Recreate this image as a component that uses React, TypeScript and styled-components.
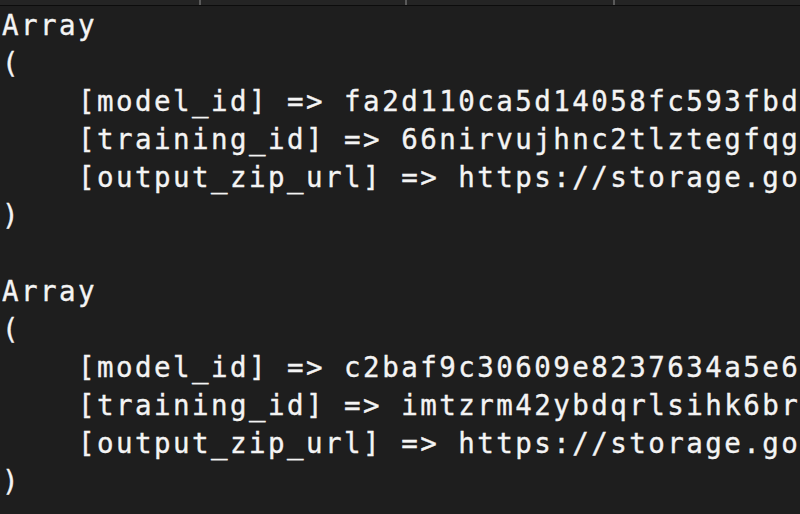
import React from "react";
import styled, { createGlobalStyle } from "styled-components";

const Global = createGlobalStyle`
  html, body { margin: 0; padding: 0; background: #1e1e1e; }
  body { width: 800px; height: 514px; overflow: hidden; }
`;

const Screen = styled.div`
  width: 800px;
  height: 514px;
  background: #1e1e1e;
  display: flex;
  flex-direction: column;
  overflow: hidden;
`;

const TabStrip = styled.div`
  height: 5px;
  display: flex;
  background: #242424;
  border-bottom: 1px solid #0c0c0c;
  flex-shrink: 0;
`;

const Tab = styled.div<{ $w: number }>`
  width: ${(p) => p.$w}px;
  height: 100%;
  border-right: 2px solid #5a5a5a;
  box-sizing: border-box;
`;

const TabRest = styled.div`
  flex: 1;
`;

const Output = styled.pre`
  margin: 0;
  padding: 0 0 0 2px;
  font-family: "DejaVu Sans Mono", "Liberation Mono", monospace;
  font-size: 27.5px;
  letter-spacing: 2.45px;
  line-height: 38px;
  color: #f4f4f4;
  -webkit-text-stroke: 0.35px #f4f4f4;
  white-space: pre;
  overflow: hidden;
`;

const Line = styled.div`
  height: 38px;
`;

const lines = [
  "Array",
  "(",
  "    [model_id] => fa2d110ca5d14058fc593fbd",
  "    [training_id] => 66nirvujhnc2tlztegfqg",
  "    [output_zip_url] => https://storage.go",
  ")",
  "",
  "Array",
  "(",
  "    [model_id] => c2baf9c30609e8237634a5e6",
  "    [training_id] => imtzrm42ybdqrlsihk6br",
  "    [output_zip_url] => https://storage.go",
  ")",
];

export default function App() {
  return (
    <Screen>
      <Global />
      <TabStrip>
        <Tab $w={201} />
        <Tab $w={206} />
        <Tab $w={208} />
        <TabRest />
      </TabStrip>
      <Output>
        {lines.map((l, i) => (
          <Line key={i}>{l}</Line>
        ))}
      </Output>
    </Screen>
  );
}
